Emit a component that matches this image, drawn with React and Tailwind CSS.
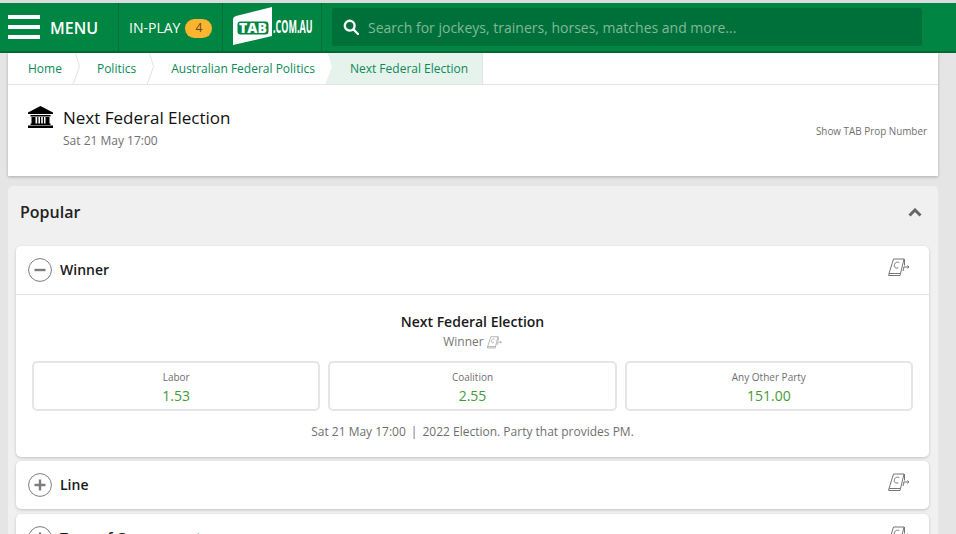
import React from "react";

const F = { fontFamily: '"Open Sans", sans-serif' };

function SgmIcon({ className = "", color = "#757575", width = "1" }) {
  return (
    <svg viewBox="0 0 22 19" className={className} fill="none" stroke={color} strokeWidth={width}>
      <path d="M5.5 1h10.5L12.5 15.5H1z" />
      <path d="M1 15.5l-.4 2h11.4l.6-2" />
      <path d="M16.5 1v6.5M15 13l1-4" />
      <path d="M11.3 4.6c-2.6-1.2-4.6.3-5 2.6-.4 2.3 1.7 3.6 4 2.6" />
      <path d="M15.5 9h5.5M19.4 7.6l1.6 1.4-1.6 1.4" />
    </svg>
  );
}

function Crumb({ children, active, first }) {
  if (active) {
    return (
      <div className="relative -ml-[24px] flex h-full items-center border-r border-[#e4e4e4] bg-[#e6f2ec] pl-[24px] pr-[14px] [clip-path:polygon(2px_0,100%_0,100%_100%,0_100%,6px_14px)]">
        <span className="text-[12px] leading-none text-[#0b8a57]">{children}</span>
      </div>
    );
  }
  return (
    <div className={`relative flex h-full items-center pr-[35px] ${first ? "pl-5" : ""}`}>
      <span className="text-[12px] leading-none text-[#0b8a57]">{children}</span>
      <svg viewBox="0 0 7 32" preserveAspectRatio="none" className="absolute right-[17px] top-0 h-full w-[7px]" fill="none" stroke="#e3e3e3">
        <path d="M2.5 0l4 14-6.2 18" />
      </svg>
    </div>
  );
}

function Market({ label, price }) {
  return (
    <div className="flex h-[50px] flex-1 flex-col items-center rounded-[5px] border-2 border-[#e5e5e5] bg-white pt-[7px]">
      <span className="text-[10px] leading-[14px] text-[#6f6f6f]">{label}</span>
      <span className="mt-[2px] text-[14px] leading-[20px] text-[#3f9c35]">{price}</span>
    </div>
  );
}

function Circle({ plus }) {
  return (
    <svg viewBox="0 0 24 24" className="h-6 w-6 shrink-0" fill="none">
      <circle cx="12" cy="12" r="11.4" stroke="#7d7d7d" strokeWidth="1" />
      <path d={plus ? "M6.5 12h11M12 6.5v11" : "M6.5 12h11"} stroke="#7d7d7d" strokeWidth="2.4" />
    </svg>
  );
}

function Row({ label, plus, className = "" }) {
  return (
    <div className={`flex items-center justify-between pl-3 pr-[19px] ${className}`}>
      <div className="flex items-center gap-2">
        <Circle plus={plus} />
        <span className="-translate-y-[1px] text-[14px] font-semibold text-[#1a1a1a]">{label}</span>
      </div>
      <SgmIcon className="h-[19px] w-[22px] -translate-y-[3px]" />
    </div>
  );
}

export default function App() {
  return (
    <div style={F} className="flex h-[534px] w-[956px] flex-col overflow-hidden bg-[#e5e5e5]">
      <div className="h-[3px] shrink-0 bg-[#dcdcdc]" />
      <header className="flex h-[50px] shrink-0 items-stretch border-b-2 border-[#006b38] bg-[#008542]">
        <div className="flex w-[119px] items-center gap-[10px] border-r border-[#006f38] pl-2">
          <div className="flex w-8 flex-col gap-[6px]">
            <div className="h-1 bg-white" />
            <div className="h-1 bg-white" />
            <div className="h-1 bg-white" />
          </div>
          <span className="translate-y-[1px] text-[16px] font-semibold leading-none text-white">MENU</span>
        </div>
        <div className="flex w-[104px] items-center gap-[5px] border-r border-[#006f38] pl-[10px]">
          <span className="translate-y-[1px] text-[14px] leading-none text-white">IN-PLAY</span>
          <span className="flex h-[19px] w-[27px] translate-y-[1px] items-center justify-center rounded-full bg-[#fdb52f] text-[12px] text-[#5a4a22]">4</span>
        </div>
        <div className="flex w-[99px] items-center gap-[1px] border-r border-[#006f38] pl-[10px]">
          <div className="relative h-[39px] w-[39px] shrink-0 -translate-y-[1px]">
            <svg viewBox="0 0 39 39" className="absolute inset-0 h-full w-full">
              <path d="M3 9 L39 0 V29 L0 38 V12 Q0 10 3 9z" fill="#fff" />
              <rect x="4.5" y="14.5" width="31" height="13" rx="3" fill="#008542" />
            </svg>
            <span className="absolute left-[6px] top-[13px] text-[14px] font-extrabold leading-[16px] text-white">TAB</span>
          </div>
          <span className="origin-left scale-x-[0.58] scale-y-[1.1] whitespace-nowrap text-[15.5px] font-bold leading-none text-white">.COM.AU</span>
        </div>
        <div className="flex flex-1 items-center pl-[10px] pr-[16px]">
          <div className="flex h-[38px] w-[590px] items-center rounded-[3px] bg-[#00703a] pl-[11px]">
            <svg viewBox="0 0 16 16" className="h-[16px] w-[16px]" fill="none" stroke="#fff" strokeWidth="2.4">
              <circle cx="6.7" cy="6.7" r="4.9" />
              <path d="M10.5 10.5L15 15" strokeLinecap="round" />
            </svg>
            <span className="ml-[9px] translate-y-[1px] text-[14px] leading-none text-[#7fb99b]">Search for jockeys, trainers, horses, matches and more...</span>
          </div>
        </div>
      </header>

      <main className="ml-2 flex w-[930px] flex-col">
        <section className="mb-[10px] flex h-[123px] flex-col bg-white shadow-[0_1px_3px_rgba(0,0,0,0.25)]">
          <nav className="flex h-[32px] items-stretch border-b border-[#e4e4e4]">
            <Crumb first>Home</Crumb>
            <Crumb>Politics</Crumb>
            <Crumb>Australian Federal Politics</Crumb>
            <Crumb active>Next Federal Election</Crumb>
          </nav>
          <div className="flex flex-1 justify-between pl-5 pr-[11px]">
            <div className="flex items-start gap-[10px] pt-[21px]">
              <svg viewBox="0 0 25 22" className="h-[22px] w-[25px]" fill="#000">
                <path d="M12.5 0L25 6.5V8H0V6.5z" />
                <path d="M2.5 9h20v1.5h-20zM3.5 11h4v6.5h-4zM9.2 11h1.2v6.5H9.2zM12 11h1.2v6.5H12zM14.8 11h1.2v6.5h-1.2zM17.5 11h4v6.5h-4zM2.5 17.5h20V19h-20zM0 19.5h25V22H0z" />
              </svg>
              <div className="flex flex-col">
                <span className="text-[17px] leading-[24px] text-[#111]">Next Federal Election</span>
                <span className="mt-[3px] text-[12px] leading-[16px] text-[#6f6f6f]">Sat 21 May 17:00</span>
              </div>
            </div>
            <span className="pt-[39px] text-[9.9px] leading-[14px] text-[#6f6f6f]">Show TAB Prop Number</span>
          </div>
        </section>

        <section className="rounded-t-[5px] bg-[#f0f0f0] px-2 pr-[9px]">
          <div className="flex h-[60px] items-center justify-between pb-2 pl-1 pr-[7px]">
            <span className="text-[16px] font-semibold text-[#222]">Popular</span>
            <svg viewBox="0 0 14 9" className="h-[9px] w-[14px]" fill="none" stroke="#666" strokeWidth="3">
              <path d="M1.5 7.5L7 2l5.5 5.5" />
            </svg>
          </div>

          <div className="mb-1 h-[211px] rounded-[5px] bg-white shadow-[0_1px_3px_rgba(0,0,0,0.2)]">
            <Row label="Winner" className="h-[49px] border-b border-[#e4e4e4]" />
            <div className="flex flex-col items-center px-4 pt-[18px]">
              <span className="text-[14px] font-semibold leading-[18px] text-[#1a1a1a]">Next Federal Election</span>
              <span className="mt-[3px] flex items-center gap-[3px] text-[12px] leading-[16px] text-[#767676]">
                Winner <SgmIcon className="h-[13px] w-[15px]" color="#999" />
              </span>
              <div className="mt-[11px] flex w-full gap-2">
                <Market label="Labor" price="1.53" />
                <Market label="Coalition" price="2.55" />
                <Market label="Any Other Party" price="151.00" />
              </div>
              <span className="mt-[13px] text-[12px] leading-[16px] text-[#6f6f6f]">Sat 21 May 17:00<span className="mx-[5px]">|</span>2022 Election. Party that provides PM.</span>
            </div>
          </div>

          <div className="mb-[5px] rounded-[5px] bg-white shadow-[0_1px_3px_rgba(0,0,0,0.2)]">
            <Row label="Line" plus className="h-[48px]" />
          </div>
          <div className="rounded-[5px] bg-white shadow-[0_1px_3px_rgba(0,0,0,0.2)]">
            <Row label="Term of Government" plus className="h-[48px]" />
          </div>
        </section>
      </main>
    </div>
  );
}
